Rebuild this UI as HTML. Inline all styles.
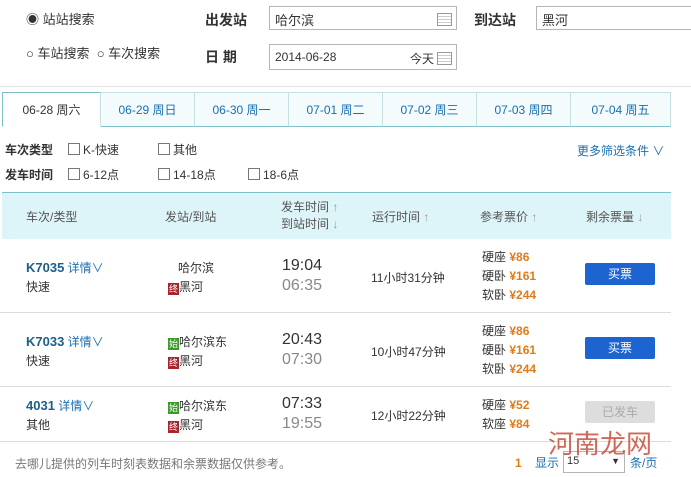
<!DOCTYPE html><html><head><meta charset="utf-8"><style>
body{margin:0;width:691px;height:477px;background:#fff;font-family:"Liberation Sans","Noto Sans CJK SC",sans-serif;font-size:12px;color:#333;position:relative;overflow:hidden}
.a{position:absolute;white-space:nowrap}
.b{font-weight:bold;font-size:14px;color:#333}
.in{position:absolute;border:1px solid #b5b5b5;background:#fff;height:24px;box-sizing:border-box;font-size:13px;padding:3px 5px}
.cal{position:absolute;right:4px;top:6px;width:13px;height:11px;border:1px solid #999;background:repeating-linear-gradient(#fff 0 2px,#ccc 2px 3px)}
.tab{position:absolute;top:92px;height:35px;box-sizing:border-box;border:1px solid #c5dfe3;border-bottom-color:#7fbfc8;border-left:none;background:#f4fbfc;color:#1a6fb0;text-align:center;line-height:35px;font-size:12px}
.cb{display:inline-block;width:10px;height:10px;border:1px solid #777;vertical-align:-1px;margin-right:3px}
.blue{color:#1a6fb0}
.tr{color:#1c5f8a;font-weight:bold;font-size:13px}
.t1{font-size:16px;color:#333}.t2{font-size:16px;color:#888}
.p{color:#e07b1a;font-weight:bold}
.btn{position:absolute;left:585px;width:70px;height:22px;background:#1d64d0;color:#fff;text-align:center;line-height:22px;border-radius:2px}
.tg{display:inline-block;width:11px;height:12px;font-size:9px;line-height:12px;color:#fff;text-align:center;vertical-align:-1px}
.line{position:absolute;left:0;width:671px;height:1px;background:#dcdcdc}
</style></head><body>
<div class="a" style="left:26px;top:9px;font-size:13px">◉ 站站搜索</div>
<div class="a" style="left:26px;top:43px;font-size:13px">○ 车站搜索 &nbsp;○ 车次搜索</div>
<div class="a b" style="left:205px;top:10px">出发站</div>
<div class="in" style="left:269px;top:6px;width:188px">哈尔滨<span class="cal"></span></div>
<div class="a b" style="left:474px;top:10px">到达站</div>
<div class="in" style="left:536px;top:6px;width:160px">黑河</div>
<div class="a b" style="left:205px;top:47px">日 期</div>
<div class="in" style="left:269px;top:44px;width:188px;height:26px;font-size:12px;padding-top:5px">2014-06-28<span style="position:absolute;right:22px;top:5px">今天</span><span class="cal" style="top:7px"></span></div>
<div class="line" style="top:86px;width:691px;background:#e4e4e4"></div>
<div class="tab" style="left:2px;width:99px;background:#fff;color:#333;border-left:1px solid #7fbfc8;border-top-color:#7fbfc8;border-bottom-color:#fff">06-28 周六</div>
<div class="tab" style="left:101px;width:94px">06-29 周日</div>
<div class="tab" style="left:195px;width:94px">06-30 周一</div>
<div class="tab" style="left:289px;width:94px">07-01 周二</div>
<div class="tab" style="left:383px;width:94px">07-02 周三</div>
<div class="tab" style="left:477px;width:94px">07-03 周四</div>
<div class="tab" style="left:571px;width:100px">07-04 周五</div>
<div class="a" style="left:5px;top:141px"><b>车次类型</b></div>
<div class="a" style="left:68px;top:141px"><span class="cb"></span>K-快速</div>
<div class="a" style="left:158px;top:141px"><span class="cb"></span>其他</div>
<div class="a blue" style="left:577px;top:142px">更多筛选条件 ∨</div>
<div class="a" style="left:5px;top:166px"><b>发车时间</b></div>
<div class="a" style="left:68px;top:166px"><span class="cb"></span>6-12点</div>
<div class="a" style="left:158px;top:166px"><span class="cb"></span>14-18点</div>
<div class="a" style="left:248px;top:166px"><span class="cb"></span>18-6点</div>
<div class="a" style="left:2px;top:192px;width:669px;height:46px;background:#ddf4f8;border-top:1px solid #7fbfc8"></div>
<div class="a" style="left:26px;top:208px;color:#555">车次/类型</div>
<div class="a" style="left:165px;top:208px;color:#555">发站/到站</div>
<div class="a" style="left:281px;top:199px;color:#555;line-height:17px">发车时间 <span style="color:#999">↑</span><br>到站时间 <span style="color:#999">↓</span></div>
<div class="a" style="left:372px;top:208px;color:#555">运行时间 <span style="color:#999">↑</span></div>
<div class="a" style="left:480px;top:208px;color:#555">参考票价 <span style="color:#999">↑</span></div>
<div class="a" style="left:586px;top:208px;color:#555">剩余票量 <span style="color:#999">↓</span></div>

<div class="a" style="left:26px;top:258px;line-height:19px"><span class="tr">K7035</span> <span class="blue">详情∨</span><br>快速</div>
<div class="a" style="left:168px;top:259px;line-height:19px">&nbsp;&nbsp;&nbsp;哈尔滨<br><span class="tg" style="background:#a8232c">终</span>黑河</div>
<div class="a" style="left:282px;top:256px;line-height:20px"><span class="t1">19:04</span><br><span class="t2">06:35</span></div>
<div class="a" style="left:371px;top:269px">11小时31分钟</div>
<div class="a" style="left:482px;top:248px;line-height:19px">硬座 <span class="p">¥86</span><br>硬卧 <span class="p">¥161</span><br>软卧 <span class="p">¥244</span></div>
<div class="btn" style="top:263px">买票</div>
<div class="line" style="top:312px"></div>

<div class="a" style="left:26px;top:332px;line-height:19px"><span class="tr">K7033</span> <span class="blue">详情∨</span><br>快速</div>
<div class="a" style="left:168px;top:333px;line-height:19px"><span class="tg" style="background:#3a9a2a">始</span>哈尔滨东<br><span class="tg" style="background:#a8232c">终</span>黑河</div>
<div class="a" style="left:282px;top:330px;line-height:20px"><span class="t1">20:43</span><br><span class="t2">07:30</span></div>
<div class="a" style="left:371px;top:343px">10小时47分钟</div>
<div class="a" style="left:482px;top:322px;line-height:19px">硬座 <span class="p">¥86</span><br>硬卧 <span class="p">¥161</span><br>软卧 <span class="p">¥244</span></div>
<div class="btn" style="top:337px">买票</div>
<div class="line" style="top:386px"></div>

<div class="a" style="left:26px;top:396px;line-height:19px"><span class="tr">4031</span> <span class="blue">详情∨</span><br>其他</div>
<div class="a" style="left:168px;top:397px;line-height:19px"><span class="tg" style="background:#3a9a2a">始</span>哈尔滨东<br><span class="tg" style="background:#a8232c">终</span>黑河</div>
<div class="a" style="left:282px;top:394px;line-height:20px"><span class="t1">07:33</span><br><span class="t2">19:55</span></div>
<div class="a" style="left:371px;top:407px">12小时22分钟</div>
<div class="a" style="left:482px;top:396px;line-height:19px">硬座 <span class="p">¥52</span><br>软座 <span class="p">¥84</span></div>
<div class="btn" style="top:401px;background:#ddd;color:#aaa">已发车</div>
<div class="line" style="top:441px"></div>

<div class="a" style="left:15px;top:455px;color:#777">去哪儿提供的列车时刻表数据和余票数据仅供参考。</div>
<div class="a" style="left:515px;top:456px;color:#e07b1a;font-weight:bold">1</div>
<div class="a blue" style="left:535px;top:454px">显示</div>
<div class="in" style="left:563px;top:451px;width:62px;height:22px;font-size:11px;padding:3px">15<span style="position:absolute;right:4px;top:4px;font-size:9px">▼</span></div>
<div class="a blue" style="left:630px;top:454px">条/页</div>
<div class="a" style="left:548px;top:424px;font-size:26px;color:#c9503e;opacity:.85">河南龙网</div>
</body></html>
